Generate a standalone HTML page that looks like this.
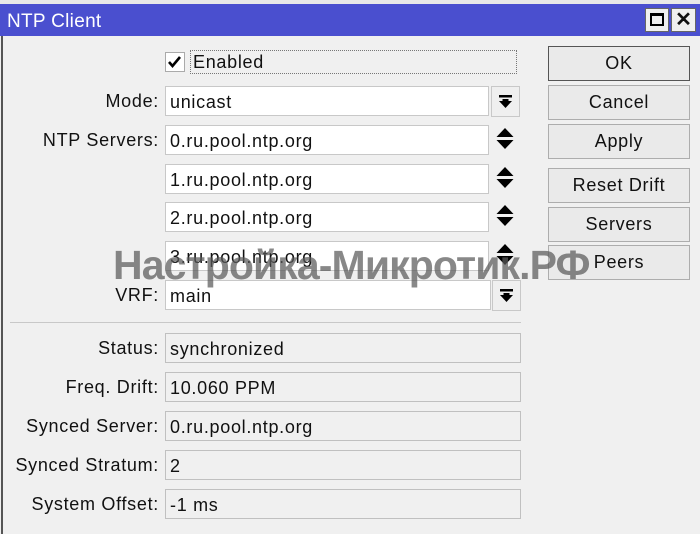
<!DOCTYPE html><html><head><meta charset="utf-8"><style>
*{box-sizing:border-box;margin:0;padding:0}
body{width:700px;height:534px;background:#f0f0f0;position:relative;overflow:hidden;font-family:"Liberation Sans",sans-serif;font-size:18px;letter-spacing:0.7px;color:#111}
.a{position:absolute}
.tb{left:0;top:4px;width:700px;height:32px;background:#4a4fcf;color:#fff;font-size:19px;padding:7px 0 0 7px;letter-spacing:0.3px}
.lb{width:159px;text-align:right;left:0}
.f{background:#fff;border:1px solid #c8c8c8;height:30px;padding:5px 0 0 4px;white-space:nowrap}
.r{background:#f0f0f0;border:1px solid #c0c0c0;height:30px;padding:5px 0 0 4px;left:165px;width:356px}
.b{left:548px;width:142px;height:35px;border:1px solid #adadad;background:#eaeaea;text-align:center;padding-top:6px}
.dd{width:29px;height:31px;border:1px solid #c8c8c8;background:#efefef}
</style></head><body>
<div class="a" style="left:0;top:0;width:700px;height:5px;background:#e8e8e8"></div>
<div class="a tb">NTP Client</div>
<div class="a" style="left:645px;top:8px;width:24px;height:24px;background:#f0f0f0;border:1px solid #666"><div style="position:absolute;left:4px;top:4px;width:14px;height:13px;border:2px solid #000;border-top-width:3px"></div></div>
<div class="a" style="left:671px;top:8px;width:25px;height:24px;background:#f0f0f0;border:1px solid #666;font-size:20px;font-weight:bold;text-align:center;line-height:22px;letter-spacing:0">✕</div>
<div class="a" style="left:1px;top:36px;width:2px;height:498px;background:#555"></div>

<div class="a" style="left:165px;top:52px;width:20px;height:20px;background:#fff;border:1px solid #aaa"><svg width="18" height="18"><path d="M3 9l3.5 4L14 4" stroke="#000" stroke-width="2.6" fill="none"/></svg></div>
<div class="a" style="left:190px;top:50px;width:327px;height:24px;border:1px dotted #777;padding:1px 0 0 2px">Enabled</div>

<div class="a lb" style="top:91px">Mode:</div>
<div class="a f" style="left:165px;top:86px;width:324px">unicast</div>
<div class="a dd" style="left:491px;top:86px"><svg width="27" height="29"><rect x="7" y="8" width="13" height="2.5"/><path d="M7 14h13l-6.5 7z M10.5 12h6v3h-6z"/></svg></div>

<div class="a lb" style="top:130px">NTP Servers:</div>
<div class="a f" style="left:165px;top:125px;width:324px">0.ru.pool.ntp.org</div>
<div class="a f" style="left:165px;top:164px;width:324px">1.ru.pool.ntp.org</div>
<div class="a f" style="left:165px;top:202px;width:324px">2.ru.pool.ntp.org</div>
<div class="a f" style="left:165px;top:241px;width:324px">3.ru.pool.ntp.org</div>
<svg class="a" style="left:496px;top:128px" width="20" height="160"><g id="ar"><path d="M9 0l8.5 9H0.5z M0.5 12h17l-8.5 9z"/></g><use href="#ar" y="39"/><use href="#ar" y="77"/><use href="#ar" y="116"/></svg>

<div class="a lb" style="top:285px">VRF:</div>
<div class="a f" style="left:165px;top:280px;width:326px">main</div>
<div class="a dd" style="left:492px;top:280px"><svg width="27" height="29"><rect x="7" y="8" width="13" height="2.5"/><path d="M7 14h13l-6.5 7z M10.5 12h6v3h-6z"/></svg></div>

<div class="a" style="left:10px;top:322px;width:511px;height:1px;background:#c8c8c8"></div>

<div class="a lb" style="top:338px">Status:</div><div class="a r" style="top:333px">synchronized</div>
<div class="a lb" style="top:377px">Freq. Drift:</div><div class="a r" style="top:372px">10.060 PPM</div>
<div class="a lb" style="top:416px">Synced Server:</div><div class="a r" style="top:411px">0.ru.pool.ntp.org</div>
<div class="a lb" style="top:455px">Synced Stratum:</div><div class="a r" style="top:450px">2</div>
<div class="a lb" style="top:494px">System Offset:</div><div class="a r" style="top:489px">-1 ms</div>

<div class="a b" style="top:46px;border-color:#555">OK</div>
<div class="a b" style="top:85px">Cancel</div>
<div class="a b" style="top:124px">Apply</div>
<div class="a b" style="top:168px">Reset Drift</div>
<div class="a b" style="top:207px">Servers</div>
<div class="a b" style="top:245px">Peers</div>

<div class="a" style="left:113px;top:242px;font-size:41px;font-weight:bold;color:rgba(90,90,90,0.72);white-space:nowrap;letter-spacing:-0.9px">Настройка-Микротик.РФ</div>
</body></html>
